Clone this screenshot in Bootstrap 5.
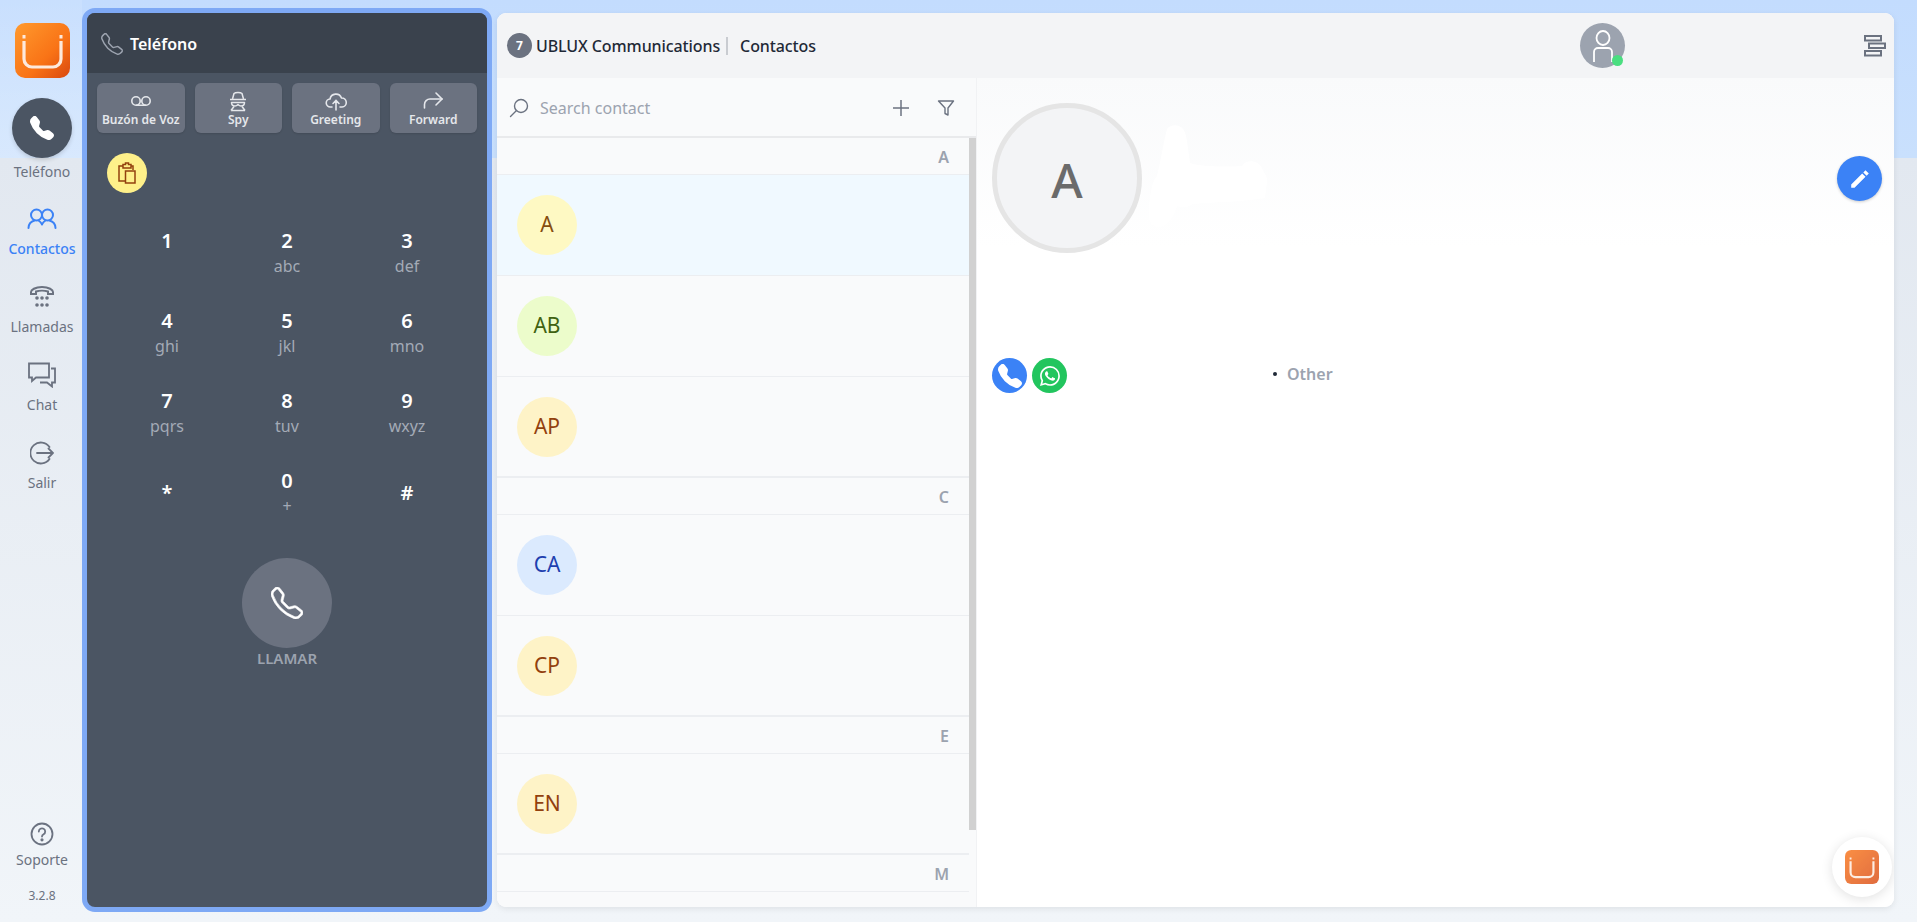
<!DOCTYPE html>
<html lang="es">
<head>
<meta charset="utf-8">
<title>UBLUX Communications</title>
<link href="https://cdn.jsdelivr.net/npm/bootstrap@5.3.0/dist/css/bootstrap.min.css" rel="stylesheet">
<style>
html,body{height:100%;overflow:hidden}
body{font-family:"Noto Sans","Open Sans",sans-serif;color:#374151;
 background:linear-gradient(#c3dcfe 0,#c9e0fd 158px,#e2e8f0 158px,#f1f5f9 100%)}
.sb-col{width:82px;flex:none;padding-left:2px;background:linear-gradient(rgba(255,255,255,.1),rgba(255,255,255,.28) 158px,rgba(255,255,255,0) 158px)}
.app-logo{width:55px;height:55px;margin-top:23px}
.call-nav{width:60px;height:60px;margin-top:20px;background:#4b5563;box-shadow:0 2px 4px rgba(0,0,0,.15)}
.nav-lab{font-size:14px;line-height:20px;color:#6b7280;text-align:center;white-space:nowrap}
.nav-first{margin:4px 0 22px}
.nav-it{height:78px;width:100%}
.nav-it .nav-lab{margin-top:5px}
.nav-ic{height:30px;color:#6b7280}
.nav-it.on .nav-ic,.nav-it.on .nav-lab{color:#3b82f6}
.nav-it.on .nav-lab{font-weight:500}
.sup-lab{margin-top:4px}
.ver{font-size:12px;line-height:16px;color:#6b7280;margin:18px 0 18px}
.ph-wrap{width:410px;flex:none;margin:8px 0 10px;border:5px solid #7ea9f5;border-radius:13px;background:#4b5563;overflow:hidden}
.ph-head{height:60px;background:#3a424d;color:#fff;font-weight:600;font-size:16px;padding:2px 0 0 14px;gap:7px;flex:none}
.ph-head svg{color:#9ca3af}
.tool-row{padding:10px;gap:10px}
.tool-btn{flex:1 1 0;height:50px;background:#6b7280;color:#e5e7eb;font-size:12px;font-weight:600;line-height:16px;padding:7px 0 0;border:0;border-radius:6px;white-space:nowrap;box-shadow:0 1px 2px rgba(0,0,0,.12)}
.tool-btn:hover{background:#6b7280;color:#e5e7eb}
.clip{width:40px;height:40px;background:#fef08a;margin:10px 0 0 20px;color:#92400e}
.pad{margin:34px 20px 0}
.pad-k{height:80px;color:#fff;text-align:center}
.pad-d{font-size:20px;line-height:28px;font-weight:600;height:28px}
.pad-d.sym{margin-top:12px}
.pad-s{font-size:16px;line-height:22px;color:#a3aab6}
.call-go{width:90px;height:90px;background:#6b7280;color:#fff;margin-top:11px}
.call-lab{font-size:15px;font-weight:600;color:#9ca3af;line-height:20px}
.main-card{margin:13px 23px 15px 5px;border-radius:9px;background:#fff;overflow:hidden;min-width:0;box-shadow:0 2px 6px rgba(0,0,0,.08)}
.top-bar{height:65px;background:#f3f4f6;flex:none;padding:0 10px;position:relative}
.t-badge{width:25px;height:25px;background:#6b7280;color:#fff;font-size:12px;font-weight:700}
.t-name{font-size:16px;font-weight:500;color:#1f2937;letter-spacing:-.1px}
.t-sep{width:2px;height:18px;background:#c9ccd1;margin:0 12px 0 6px}
.user-av{width:45px;height:45px;background:#9ca3af;color:#fff;position:absolute;left:1083px;top:10px}
.user-dot{width:11px;height:11px;background:#4ade80;position:absolute;right:2px;bottom:2px}
.menu-ic{position:absolute;left:1367px;top:22px;color:#6b7280}
.list-col{width:480px;flex:none;background:#f9fafb;border-right:1px solid #f1f2f4}
.search-row{height:60px;flex:none;border-bottom:2px solid #e9eaec;padding:2px 21px 0 12px;color:#6b7280}
.search-tx{font-size:16px;color:#9ca3af;margin-left:11px}
.plus-ic{margin-right:26px}
.sc-track{width:7px;flex:none}
.sc-thumb{height:692px;background:#d1d1d1}
.letter{height:37px;border-bottom:1px solid #eceef1;padding-right:20px;font-size:16px;font-weight:600;color:#9ca3af;line-height:38px;text-align:right}
.person{height:101px;border-bottom:1px solid #eceef1;padding-left:20px}
.person.sel{background:#f0f9ff}
.person.last{border-bottom:2px solid #eceef1}
.av-c{width:60px;height:60px;font-size:21px}
.c-yel{background:#fef9c3;color:#854d0e}
.c-lim{background:#ecfccb;color:#3f6212}
.c-amb{background:#fef3c7;color:#92400e}
.c-blu{background:#dbeafe;color:#1e40af}
.detail{background:linear-gradient(#f9fafb 0,#fff 170px);min-width:0;position:relative;padding:25px 0 0 15px}
.big-av{width:150px;height:150px;background:#f3f4f6;border:5px solid #e5e5e5;color:#6b6b6b;font-size:48px;font-weight:500;padding-top:4px}
.smear{position:absolute;left:172px;top:47px;color:#fff}
.edit-b{width:45px;height:45px;background:#3b82f6;color:#fff;position:absolute;left:860px;top:78px;box-shadow:0 1px 3px rgba(0,0,0,.2)}
.rnd35{width:35px;height:35px;color:#fff}
.bg-ph{background:#3b82f6}
.bg-wa{background:#22c55e}
.ph-row{margin-top:105px;gap:5px}
.ph-type{margin:-4px 0 0 201px;font-size:16px;font-weight:600;color:#9ca3af;gap:10px}
.dotx{width:4px;height:4px;background:#1f2937}
.float-b{width:60px;height:60px;background:#fff;position:absolute;right:2px;bottom:10px;box-shadow:0 2px 12px rgba(0,0,0,.12)}
.float-b svg{opacity:.8}
</style>
</head>
<body class="d-flex">
<aside class="sb-col d-flex flex-column align-items-center">
  <svg class="app-logo" viewBox="0 0 55 55"><defs><linearGradient id="lg" x1="0" y1="0" x2="1" y2="1"><stop offset="0" stop-color="#ff9a2e"/><stop offset=".6" stop-color="#f97316"/><stop offset="1" stop-color="#d9480f"/></linearGradient></defs><rect width="55" height="55" rx="10" fill="url(#lg)"/><path d="M9 18v18a8 8 0 0 0 8 8h21a8 8 0 0 0 8-8V18" fill="none" stroke="#fde9dc" stroke-width="3.200"/><path d="M9 12v3.500M46 12v3.500" stroke="#fde9dc" stroke-width="3"/></svg>
  <div class="call-nav rounded-circle d-flex align-items-center justify-content-center"><svg width="24" height="24" viewBox="0 0 16 16" fill="#fff"><path d="M1.885.511a1.745 1.745 0 0 1 2.61.163L6.29 2.98c.329.423.445.974.315 1.494l-.547 2.19a.678.678 0 0 0 .178.643l2.457 2.457a.678.678 0 0 0 .644.178l2.189-.547a1.745 1.745 0 0 1 1.494.315l2.306 1.794c.829.645.905 1.87.163 2.611l-1.034 1.034c-.74.74-1.846 1.065-2.877.702a18.634 18.634 0 0 1-7.01-4.42 18.634 18.634 0 0 1-4.42-7.009c-.362-1.03-.037-2.137.703-2.877L1.885.511z"/></svg></div>
  <div class="nav-lab nav-first">Teléfono</div>
  <div class="nav-it on d-flex flex-column align-items-center">
    <div class="nav-ic d-flex align-items-center"><svg width="30" height="22" viewBox="0 0 30 22" fill="none" stroke="currentColor" stroke-width="2" stroke-linecap="round"><circle cx="9.500" cy="7" r="5.500"/><circle cx="20.500" cy="7" r="5.500"/><path d="M1.500 20a8 8 0 0 1 6-7.500M11.500 12.500a8 8 0 0 1 3.500 4M18.500 12.500a8 8 0 0 0-3.500 4M28.500 20a8 8 0 0 0-6-7.500"/></svg></div>
    <div class="nav-lab">Contactos</div>
  </div>
  <div class="nav-it d-flex flex-column align-items-center">
    <div class="nav-ic d-flex align-items-center"><svg width="26" height="24" viewBox="0 0 26 24" fill="none" stroke="currentColor" stroke-width="2"><path d="M2 9V7c0-2 4-5 11-5s11 3 11 5v2h-5V6.500c-3-1-9-1-12 0V9z"/><g fill="currentColor" stroke="none"><circle cx="8" cy="13" r="1.800"/><circle cx="13" cy="13" r="1.800"/><circle cx="18" cy="13" r="1.800"/><circle cx="8" cy="20" r="1.800"/><circle cx="13" cy="20" r="1.800"/><circle cx="18" cy="20" r="1.800"/></g></svg></div>
    <div class="nav-lab">Llamadas</div>
  </div>
  <div class="nav-it d-flex flex-column align-items-center">
    <div class="nav-ic d-flex align-items-center"><svg width="28" height="26" viewBox="0 0 28 26" fill="none" stroke="currentColor" stroke-width="1.800"><path d="M1 1.500h20v14H8l-4 3.500v-3.500H1z"/><path d="M23 6.500h4v14h-3v4l-5-4h-7"/></svg></div>
    <div class="nav-lab">Chat</div>
  </div>
  <div class="nav-it d-flex flex-column align-items-center">
    <div class="nav-ic d-flex align-items-center"><svg width="24" height="24" viewBox="0 0 24 24" fill="none" stroke="currentColor" stroke-width="1.800" stroke-linecap="round"><path d="M19.500 6A10.500 10.500 0 1 0 19.500 18"/><path d="M7 12h16M18.500 7.500 23 12l-4.500 4.500"/></svg></div>
    <div class="nav-lab">Salir</div>
  </div>
  <div class="mt-auto d-flex flex-column align-items-center">
    <svg width="24" height="24" viewBox="0 0 24 24" fill="none" stroke="#6b7280" stroke-width="1.800" stroke-linecap="round"><circle cx="12" cy="12" r="10.500"/><path d="M8.800 9.500a3.200 3.200 0 1 1 4.800 2.800c-1 .6-1.600 1.200-1.600 2.200"/><circle cx="12" cy="17.800" r=".7" fill="#6b7280"/></svg>
    <div class="nav-lab sup-lab">Soporte</div>
    <div class="ver">3.2.8</div>
  </div>
</aside>

<section class="ph-wrap d-flex flex-column">
  <div class="ph-head d-flex align-items-center">
    <svg width="22" height="22" viewBox="0 0 16 16" fill="currentColor"><path d="M3.654 1.328a.678.678 0 0 0-1.015-.063L1.605 2.3c-.483.484-.661 1.169-.45 1.770a17.568 17.568 0 0 0 4.168 6.608 17.569 17.569 0 0 0 6.608 4.168c.601.211 1.286.033 1.770-.45l1.034-1.034a.678.678 0 0 0-.063-1.015l-2.307-1.794a.678.678 0 0 0-.58-.122l-2.190.547a1.745 1.745 0 0 1-1.657-.459L5.482 8.062a1.745 1.745 0 0 1-.46-1.657l.548-2.190a.678.678 0 0 0-.122-.58L3.654 1.328zM1.884.511a1.745 1.745 0 0 1 2.612.163L6.290 2.980c.329.423.445.974.315 1.494l-.547 2.190a.678.678 0 0 0 .178.643l2.457 2.457a.678.678 0 0 0 .644.178l2.189-.547a1.745 1.745 0 0 1 1.494.315l2.306 1.794c.829.645.905 1.870.163 2.611l-1.034 1.034c-.74.74-1.846 1.065-2.877.702a18.634 18.634 0 0 1-7.010-4.420 18.634 18.634 0 0 1-4.420-7.009c-.362-1.030-.037-2.137.703-2.877L1.885.511z"/></svg>
    <span>Teléfono</span>
  </div>
  <div class="tool-row d-flex">
    <button class="btn tool-btn d-flex flex-column align-items-center"><svg width="22" height="22" viewBox="0 0 22 22" fill="none" stroke="currentColor" stroke-width="1.600"><circle cx="6" cy="11" r="4.200"/><circle cx="16" cy="11" r="4.200"/><path d="M6 15.200h10"/></svg>Buzón de Voz</button>
    <button class="btn tool-btn d-flex flex-column align-items-center"><svg width="22" height="22" viewBox="0 0 22 22" fill="none" stroke="currentColor" stroke-width="1.500" stroke-linejoin="round"><path d="M5.500 9 7 3.500c1.500-1.500 6.500-1.500 8 0L16.500 9"/><path d="M3 9.500h16"/><path d="M4.500 12.500c0 2.500 2 3.500 3.500 3.500s2.500-1 3-1.500c.5.500 1.500 1.500 3 1.500s3.500-1 3.500-3.500z"/><path d="M4 20.500l3-4M18 20.500l-3-4M4 20.500h14"/></svg>Spy</button>
    <button class="btn tool-btn d-flex flex-column align-items-center"><svg width="22" height="22" viewBox="0 0 22 22" fill="none" stroke="currentColor" stroke-width="1.600" stroke-linecap="round"><path d="M7 17H5.500a4 4 0 0 1-.5-8 6 6 0 0 1 11.500-1 4.500 4.500 0 0 1 .5 9h-2"/><path d="M11 20v-9M8 13.500l3-3 3 3"/></svg>Greeting</button>
    <button class="btn tool-btn d-flex flex-column align-items-center"><svg width="22" height="22" viewBox="0 0 22 22" fill="none" stroke="currentColor" stroke-width="1.600" stroke-linecap="round"><path d="M20 9H8a5.500 5.500 0 0 0-5.500 5.500V18"/><path d="M14 3l6 6-6 6"/></svg>Forward</button>
  </div>
  <div class="clip rounded-circle d-flex align-items-center justify-content-center"><svg width="20" height="22" viewBox="0 0 20 22" fill="none" stroke="currentColor" stroke-width="1.500"><path d="M6 4H2v15h6"/><path d="M6 2.500h2.500V1h3v1.500H14V6H6z"/><path d="M14 4h2v4"/><rect x="8.500" y="9" width="9.500" height="12"/></svg></div>
  <div class="pad row g-0">
    <div class="col-4 pad-k"><div class="pad-d">1</div></div>
    <div class="col-4 pad-k"><div class="pad-d">2</div><div class="pad-s">abc</div></div>
    <div class="col-4 pad-k"><div class="pad-d">3</div><div class="pad-s">def</div></div>
    <div class="col-4 pad-k"><div class="pad-d">4</div><div class="pad-s">ghi</div></div>
    <div class="col-4 pad-k"><div class="pad-d">5</div><div class="pad-s">jkl</div></div>
    <div class="col-4 pad-k"><div class="pad-d">6</div><div class="pad-s">mno</div></div>
    <div class="col-4 pad-k"><div class="pad-d">7</div><div class="pad-s">pqrs</div></div>
    <div class="col-4 pad-k"><div class="pad-d">8</div><div class="pad-s">tuv</div></div>
    <div class="col-4 pad-k"><div class="pad-d">9</div><div class="pad-s">wxyz</div></div>
    <div class="col-4 pad-k"><div class="pad-d sym">*</div></div>
    <div class="col-4 pad-k"><div class="pad-d">0</div><div class="pad-s">+</div></div>
    <div class="col-4 pad-k"><div class="pad-d sym">#</div></div>
  </div>
  <div class="d-flex flex-column align-items-center">
    <div class="call-go rounded-circle d-flex align-items-center justify-content-center"><svg width="32" height="32" viewBox="0 0 16 16" fill="currentColor" stroke="currentColor" stroke-width=".3"><path d="M3.654 1.328a.678.678 0 0 0-1.015-.063L1.605 2.3c-.483.484-.661 1.169-.45 1.770a17.568 17.568 0 0 0 4.168 6.608 17.569 17.569 0 0 0 6.608 4.168c.601.211 1.286.033 1.770-.45l1.034-1.034a.678.678 0 0 0-.063-1.015l-2.307-1.794a.678.678 0 0 0-.58-.122l-2.190.547a1.745 1.745 0 0 1-1.657-.459L5.482 8.062a1.745 1.745 0 0 1-.46-1.657l.548-2.190a.678.678 0 0 0-.122-.58L3.654 1.328zM1.884.511a1.745 1.745 0 0 1 2.612.163L6.290 2.980c.329.423.445.974.315 1.494l-.547 2.190a.678.678 0 0 0 .178.643l2.457 2.457a.678.678 0 0 0 .644.178l2.189-.547a1.745 1.745 0 0 1 1.494.315l2.306 1.794c.829.645.905 1.870.163 2.611l-1.034 1.034c-.74.74-1.846 1.065-2.877.702a18.634 18.634 0 0 1-7.010-4.420 18.634 18.634 0 0 1-4.420-7.009c-.362-1.030-.037-2.137.703-2.877L1.885.511z"/></svg></div>
    <div class="call-lab">LLAMAR</div>
  </div>
</section>

<main class="main-card flex-grow-1 d-flex flex-column">
  <header class="top-bar d-flex align-items-center">
    <span class="t-badge rounded-circle d-flex align-items-center justify-content-center me-1">7</span>
    <span class="t-name">UBLUX Communications</span><span class="t-sep"></span><span class="t-name">Contactos</span>
    <div class="user-av rounded-circle d-flex align-items-center justify-content-center"><svg width="26" height="36" viewBox="0 0 26 36" fill="none" stroke="currentColor" stroke-width="1.800"><ellipse cx="13" cy="10" rx="6.500" ry="7"/><path d="M4 34V24a4 4 0 0 1 4-4h10a4 4 0 0 1 4 4v10"/></svg><span class="user-dot rounded-circle"></span></div>
    <svg class="menu-ic" width="22" height="22" viewBox="0 0 22 22" fill="none" stroke="currentColor" stroke-width="2"><rect x="1" y="1" width="16" height="4.500"/><rect x="5" y="8.500" width="16" height="4.500"/><rect x="1" y="16" width="16" height="4.500"/></svg>
  </header>
  <div class="d-flex flex-grow-1" style="min-height:0">
    <div class="list-col d-flex flex-column">
      <div class="search-row d-flex align-items-center">
        <svg width="20" height="20" viewBox="0 0 20 20" fill="none" stroke="currentColor" stroke-width="1.400" stroke-linecap="round"><circle cx="12" cy="8" r="6.500"/><path d="M7.500 12.500 1.500 18.500"/></svg>
        <span class="search-tx flex-grow-1">Search contact</span>
        <svg class="plus-ic" width="20" height="20" viewBox="0 0 20 20" fill="none" stroke="currentColor" stroke-width="1.500"><path d="M10 2v16M2 10h16"/></svg>
        <svg width="18" height="18" viewBox="0 0 18 18" fill="none" stroke="currentColor" stroke-width="1.400" stroke-linejoin="round"><path d="M1.500 2h15L11 9v7l-3-1.500V9z"/></svg>
      </div>
      <div class="d-flex flex-grow-1" style="min-height:0;overflow:hidden">
        <div class="flex-grow-1">
          <div class="letter">A</div>
          <div class="person sel d-flex align-items-center"><div class="av-c c-yel rounded-circle d-flex align-items-center justify-content-center">A</div></div>
          <div class="person d-flex align-items-center"><div class="av-c c-lim rounded-circle d-flex align-items-center justify-content-center">AB</div></div>
          <div class="person last d-flex align-items-center"><div class="av-c c-amb rounded-circle d-flex align-items-center justify-content-center">AP</div></div>
          <div class="letter">C</div>
          <div class="person d-flex align-items-center"><div class="av-c c-blu rounded-circle d-flex align-items-center justify-content-center">CA</div></div>
          <div class="person last d-flex align-items-center"><div class="av-c c-amb rounded-circle d-flex align-items-center justify-content-center">CP</div></div>
          <div class="letter">E</div>
          <div class="person last d-flex align-items-center"><div class="av-c c-amb rounded-circle d-flex align-items-center justify-content-center">EN</div></div>
          <div class="letter">M</div>
        </div>
        <div class="sc-track"><div class="sc-thumb"></div></div>
      </div>
    </div>
    <div class="detail flex-grow-1">
      <div class="big-av rounded-circle d-flex align-items-center justify-content-center">A</div>
      <svg class="smear" width="136" height="102" viewBox="0 0 136 102" fill="currentColor"><path d="M18 4c4-5 12-5 16 0 3 4 3 8 4 12l3 22c12 4 34 4 52 3 4-7 16-6 20 2 2 6 6 8 5 14l-2 16c-22 4-50 4-72 6-6 4-12 4-16 2-2 8-8 18-14 20-8 3-14-2-14-10 0-14 2-34 8-40 4-16 6-32 10-47z"/></svg>
      <div class="edit-b rounded-circle d-flex align-items-center justify-content-center"><svg width="22" height="22" viewBox="0 0 20 20" fill="currentColor"><path d="M2 15v3h3L15 8l-3-3zM13 4l3 3 2-2-3-3z"/></svg></div>
      <div class="ph-row d-flex align-items-center">
        <div class="rnd35 bg-ph rounded-circle d-flex align-items-center justify-content-center"><svg width="24" height="24" viewBox="0 0 16 16" fill="currentColor"><path d="M1.885.511a1.745 1.745 0 0 1 2.61.163L6.290 2.980c.329.423.445.974.315 1.494l-.547 2.190a.678.678 0 0 0 .178.643l2.457 2.457a.678.678 0 0 0 .644.178l2.189-.547a1.745 1.745 0 0 1 1.494.315l2.306 1.794c.829.645.905 1.870.163 2.611l-1.034 1.034c-.74.74-1.846 1.065-2.877.702a18.634 18.634 0 0 1-7.010-4.420 18.634 18.634 0 0 1-4.420-7.009c-.362-1.030-.037-2.137.703-2.877L1.885.511z"/></svg></div>
        <div class="rnd35 bg-wa rounded-circle d-flex align-items-center justify-content-center"><svg width="20" height="20" viewBox="0 0 16 16" fill="currentColor"><path d="M13.601 2.326A7.854 7.854 0 0 0 7.994 0C3.627 0 .068 3.558.064 7.926c0 1.399.366 2.76 1.057 3.965L0 16l4.204-1.102a7.933 7.933 0 0 0 3.79.965h.004c4.368 0 7.926-3.558 7.93-7.93A7.898 7.898 0 0 0 13.6 2.326zM7.994 14.521a6.573 6.573 0 0 1-3.356-.92l-.24-.144-2.494.654.666-2.433-.156-.251a6.56 6.56 0 0 1-1.007-3.505c0-3.626 2.957-6.584 6.591-6.584a6.56 6.56 0 0 1 4.66 1.931 6.557 6.557 0 0 1 1.928 4.66c-.004 3.639-2.961 6.592-6.592 6.592zm3.615-4.934c-.197-.099-1.17-.578-1.353-.646-.182-.065-.315-.099-.445.099-.133.197-.513.646-.627.775-.114.133-.232.148-.43.05-.197-.1-.836-.308-1.592-.985-.59-.525-.985-1.175-1.103-1.372-.114-.198-.011-.304.088-.403.087-.088.197-.232.296-.346.1-.114.133-.198.198-.33.065-.134.034-.248-.015-.347-.05-.099-.445-1.076-.612-1.47-.16-.389-.323-.335-.445-.34-.114-.007-.247-.007-.38-.007a.729.729 0 0 0-.529.247c-.182.198-.691.677-.691 1.654 0 .977.71 1.916.81 2.049.098.133 1.394 2.132 3.383 2.992.47.205.84.326 1.129.418.475.152.904.129 1.246.08.38-.058 1.171-.48 1.338-.943.164-.464.164-.86.114-.943-.049-.084-.182-.133-.38-.232z"/></svg></div>
        <div class="ph-type d-flex align-items-center"><span class="dotx rounded-circle"></span><span>Other</span></div>
      </div>
      <div class="float-b rounded-circle d-flex align-items-center justify-content-center"><svg width="34" height="34" viewBox="0 0 55 55"><defs><linearGradient id="lf" x1="0" y1="0" x2="1" y2="1"><stop offset="0" stop-color="#f97316"/><stop offset="1" stop-color="#d9480f"/></linearGradient></defs><rect width="55" height="55" rx="10" fill="url(#lf)"/><path d="M9 18v18a8 8 0 0 0 8 8h21a8 8 0 0 0 8-8V18" fill="none" stroke="#fde9dc" stroke-width="3.500"/><path d="M9 12v3.500M46 12v3.500" stroke="#fde9dc" stroke-width="3"/></svg></div>
    </div>
  </div>
</main>
</body>
</html>
